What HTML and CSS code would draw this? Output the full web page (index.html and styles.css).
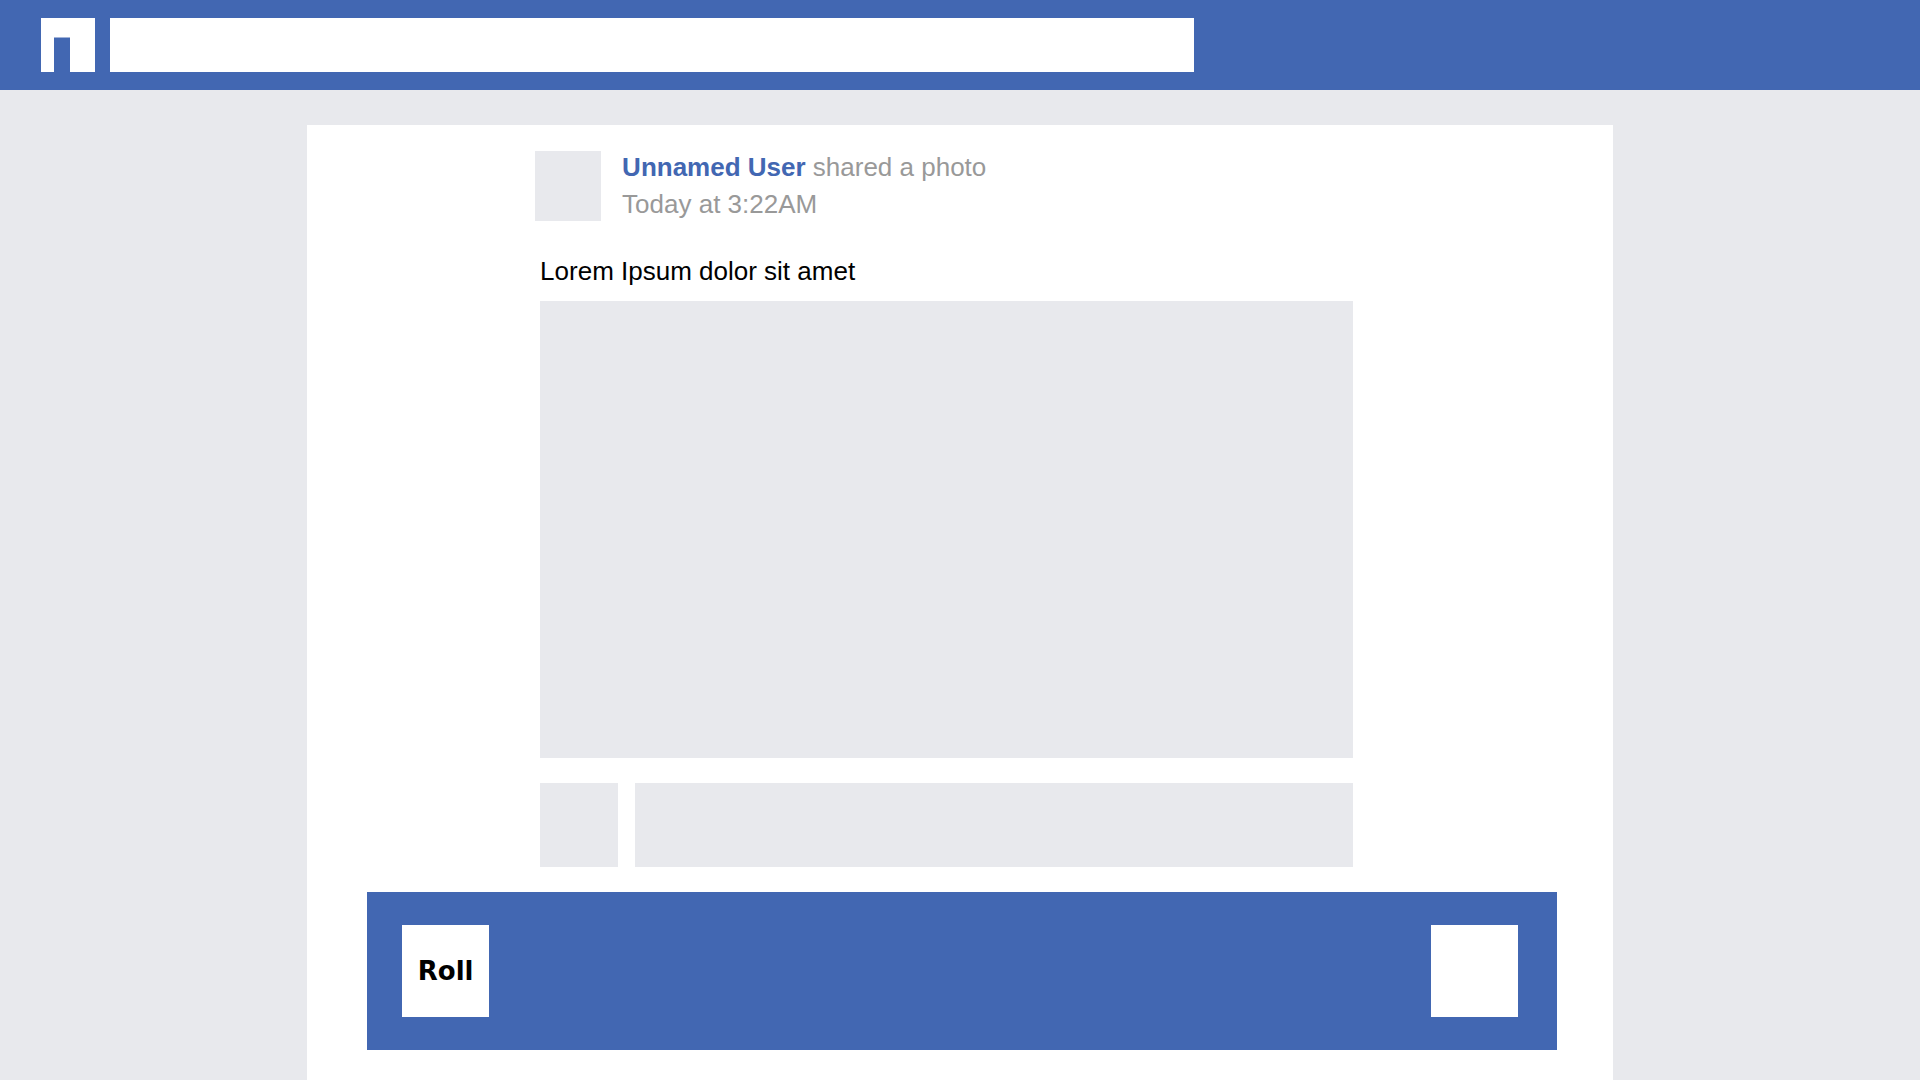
FILE: index.html
```html
<!DOCTYPE html>
<html lang="en">
<head>
<meta charset="utf-8">
<meta name="viewport" content="width=device-width, initial-scale=1">
<title>Feed</title>
<link rel="stylesheet" href="styles.css">
</head>
<body>
<header class="topbar">
  <a class="logo" href="#" aria-label="Home">
    <svg width="54" height="54" viewBox="0 0 54 54" aria-hidden="true"><path fill="#fff" d="M0 0h54v54H29V19.500H13V54H0z"/></svg>
  </a>
  <input class="search" type="search" aria-label="Search">
</header>
<main class="page">
  <div class="card">
    <article class="post">
      <header class="byline">
        <div class="avatar"></div>
        <p class="meta"><a class="author" href="#">Unnamed User</a> shared a photo<br>Today at 3:22AM</p>
      </header>
      <p class="message">Lorem Ipsum dolor sit amet</p>
      <div class="photo"></div>
      <div class="reply">
        <div class="reply-avatar"></div>
        <input class="comment" type="text" aria-label="Comment">
      </div>
    </article>
    <div class="actions">
      <button class="action" type="button">Roll</button>
      <button class="action" type="button" aria-label="More"></button>
    </div>
  </div>
</main>
</body>
</html>
```
FILE: styles.css
```css
* {
  box-sizing: border-box;
}

body {
  display: flex;
  flex-direction: column;
  min-height: 100vh;
  margin: 0;
  border-bottom: 1px solid #fff;
  background: #e8e9ed;
  color: #000;
  font: 26px/37px "Liberation Sans", Arial, sans-serif;
}

p {
  margin: 0;
}

input,
button {
  border: 0;
  border-radius: 0;
  font: inherit;
  appearance: none;
}

.topbar {
  display: grid;
  grid-template-columns: 54px 1084fr 711fr;
  column-gap: 15px;
  padding: 18px 0 18px 41px;
  background: #4267b2;
}

.logo svg {
  display: block;
}

.search {
  width: 100%;
  height: 54px;
  padding: 0 16px;
  background: #fff;
}

.page {
  display: flex;
  flex: 1;
  padding: 35px 16% 0;
}

.card {
  display: grid;
  flex: 1;
  grid-template-columns: 233fr 813fr 260fr;
  align-content: start;
  padding-bottom: 29px;
  background: #fff;
}

.post {
  grid-column: 2;
  padding-top: 26px;
}

.byline {
  display: flex;
  gap: 21px;
  margin-left: -5px;
}

.avatar {
  width: 66px;
  height: 70px;
  background: #e8e9ed;
}

.meta {
  margin-top: -2px;
  color: #999;
}

.author {
  color: #4267b2;
  font-weight: bold;
  text-decoration: none;
}

.message {
  margin: 30px 0 11px;
}

.photo {
  height: 457px;
  background: #e8e9ed;
}

.reply {
  display: flex;
  gap: 17px;
  margin-top: 25px;
}

.reply-avatar {
  width: 78px;
  height: 84px;
  background: #e8e9ed;
}

.comment {
  flex: 1;
  min-width: 0;
  padding: 0 16px;
  background: #e8e9ed;
}

.actions {
  display: flex;
  grid-column: 1 / -1;
  justify-content: space-between;
  margin: 25px 56px 0 60px;
  padding: 33px 39px 33px 35px;
  background: #4267b2;
}

.action {
  width: 87px;
  height: 92px;
  padding: 0;
  background: #fff;
  color: #000;
  font: bold 26px/37px "DejaVu Sans", sans-serif;
}
```
